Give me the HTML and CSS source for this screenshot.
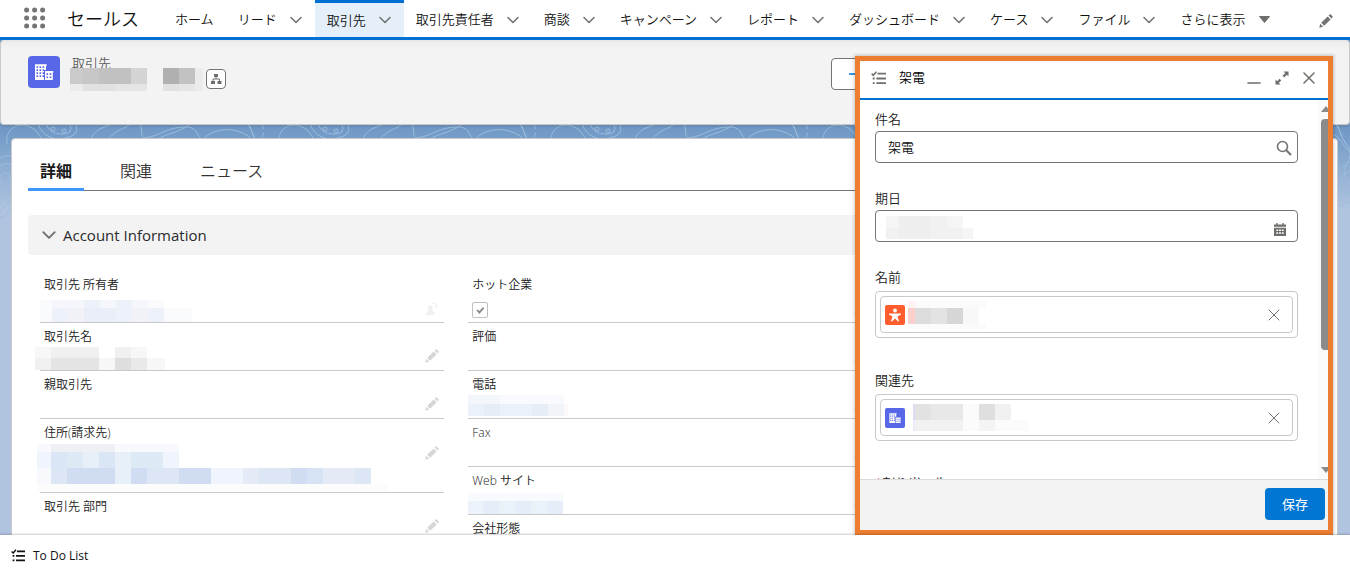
FILE: index.html
```html
<!DOCTYPE html>
<html lang="ja">
	<head>
		<title>取引先 | セールス</title>
		<meta charset="utf-8">
		<meta name="viewport" content="width=device-width, initial-scale=1.0">
		<link rel="stylesheet" href="styles.css">
	</head>
	<body>
		<!-- shared icons -->
		<svg width="0" height="0" class="defs" aria-hidden="true">
			<symbol id="chevron" viewBox="0 0 14 14"><path d="M2 4.500 L7 9.500 L12 4.500" fill="none" stroke="currentColor" stroke-width="1.6" stroke-linecap="round" stroke-linejoin="round"/></symbol>
			<symbol id="pencil" viewBox="0 0 14 14"><path d="M.3 13.7 L1.2 9.8 L4.2 12.8 Z M2.2 8.8 L8.6 2.4 L11.6 5.4 L5.2 11.8 Z M9.5 1.5 L10.6 .4 Q11.2 -.1 11.8 .5 L13.5 2.2 Q14 2.8 13.5 3.4 L12.5 4.5 Z" fill="currentColor"/></symbol>
			<symbol id="close" viewBox="0 0 12 12"><path d="M1 1 L11 11 M11 1 L1 11" fill="none" stroke="currentColor" stroke-width="1.5" stroke-linecap="round"/></symbol>
			<symbol id="close-thin" viewBox="0 0 12 12"><path d="M1 1 L11 11 M11 1 L1 11" fill="none" stroke="currentColor" stroke-linecap="round"/></symbol>
			<symbol id="tasks" viewBox="0 0 14 13"><path d="M.6 2.4 L2.2 4 L5 .7" fill="none" stroke="currentColor" stroke-width="1.4"/><path d="M6 1.5h8v1.8H6z M5 6h9v1.8H5z M5 10.4h9v1.8H5z M1.6 6h1.8v1.8H1.6z M1.6 10.4h1.8v1.8H1.6z" fill="currentColor"/></symbol>
			<symbol id="account" viewBox="0 0 32 32">
				<path fill="#fff" d="M7 8.300h11.700v1.700h-.7v4h-2v10H7z M17 15h8.300v1.500h-.5v7.500H17z"/>
				<path fill="#5867e8" d="M8.500 10.300h1.600v1.600H8.500z M11.500 10.300h1.600v1.600h-1.600z M14.500 10.300h1.600v1.600h-1.600z M8.500 13.300h1.600v1.600H8.500z M11.500 13.300h1.600v1.600h-1.600z M8.500 16.300h1.600v1.600H8.500z M11.500 16.300h1.600v1.600h-1.600z M8.500 19.300h1.600v1.600H8.500z M11.500 19.300h1.600v1.600h-1.600z M14.500 13.300h1.500v1.600h-1.500z M14.500 16.300h1.500v1.600h-1.500z M14.500 19.300h1.500v1.600h-1.500z M18.500 17.300h1.600v1.600h-1.600z M21.700 17.300h1.600v1.600h-1.600z M18.500 20.500h1.600v1.600h-1.600z M21.700 20.500h1.600v1.600h-1.600z"/>
			</symbol>
		</svg>

		<header class="nav">
			<button class="launcher" aria-label="アプリケーションランチャー">
				<svg width="23" height="23" viewBox="0 0 23 23" fill="#747474">
					<circle cx="2.600" cy="3" r="2.500"/><circle cx="10.600" cy="3" r="2.500"/><circle cx="18.600" cy="3" r="2.500"/>
					<circle cx="2.600" cy="11" r="2.500"/><circle cx="10.600" cy="11" r="2.500"/><circle cx="18.600" cy="11" r="2.500"/>
					<circle cx="2.600" cy="19" r="2.500"/><circle cx="10.600" cy="19" r="2.500"/><circle cx="18.600" cy="19" r="2.500"/>
				</svg>
			</button>
			<span class="app-name">セールス</span>
			<nav class="nav-items">
				<div class="nav-item"><a href="#home">ホーム</a></div>
				<div class="nav-item"><a href="#lead">リード</a><button aria-label="リードのリスト"><svg><use href="#chevron"/></svg></button></div>
				<div class="nav-item active"><a href="#account">取引先</a><button aria-label="取引先のリスト"><svg><use href="#chevron"/></svg></button></div>
				<div class="nav-item"><a href="#contact">取引先責任者</a><button aria-label="取引先責任者のリスト"><svg><use href="#chevron"/></svg></button></div>
				<div class="nav-item"><a href="#opportunity">商談</a><button aria-label="商談のリスト"><svg><use href="#chevron"/></svg></button></div>
				<div class="nav-item"><a href="#campaign">キャンペーン</a><button aria-label="キャンペーンのリスト"><svg><use href="#chevron"/></svg></button></div>
				<div class="nav-item"><a href="#report">レポート</a><button aria-label="レポートのリスト"><svg><use href="#chevron"/></svg></button></div>
				<div class="nav-item"><a href="#dashboard">ダッシュボード</a><button aria-label="ダッシュボードのリスト"><svg><use href="#chevron"/></svg></button></div>
				<div class="nav-item"><a href="#case">ケース</a><button aria-label="ケースのリスト"><svg><use href="#chevron"/></svg></button></div>
				<div class="nav-item"><a href="#file">ファイル</a><button aria-label="ファイルのリスト"><svg><use href="#chevron"/></svg></button></div>
				<div class="nav-item"><a href="#more">さらに表示</a><button aria-label="その他のタブ"><svg viewBox="0 0 14 14"><path d="M2.500 3.500h10l-5 6z" fill="#706e6b" stroke="#706e6b" stroke-linejoin="round"/></svg></button></div>
			</nav>
			<button class="nav-edit" aria-label="ナビゲーション項目を編集"><svg width="14" height="14"><use href="#pencil"/></svg></button>
		</header>

		<main class="stage">
			<svg class="topo" width="100%" height="180" aria-hidden="true">
				<defs>
					<pattern id="waves" width="272" height="180" patternUnits="userSpaceOnUse">
						<g fill="none" stroke="#9dbbdc" stroke-width="1">
							<path d="M7 104 C5 92 14 82 28 86 S40 106 56 112 S84 98 108 108"/>
							<path d="M38 84 C42 96 54 101 66 98 S78 90 75 82"/>
							<path d="M46 84 Q50 94 62 94 T70 84"/>
							<circle cx="53" cy="89" r="2"/><circle cx="64" cy="91" r="2"/>
							<path d="M90 102 C94 88 104 88 112 84 M140 84 C144 94 138 100 150 97 S166 88 184 87 S192 100 212 104"/>
							<path d="M104 104 C116 88 124 90 130 84 M156 104 C160 92 176 96 190 84"/>
							<path d="M200 104 C206 92 224 86 240 92 S252 104 262 112 M208 106 Q224 92 242 104"/>
							<path d="M248 84 L258 104 M262 84 Q266 94 260 100" stroke-dasharray="5 4"/>
							<circle cx="5" cy="138" r="5"/>
							<path d="M0 118 Q6 114 12 116 M0 126 Q8 121 14 126 M0 152 Q8 150 12 140 M-2 166 Q6 156 12 150 M-2 174 Q6 164 12 158 M0 178 Q8 176 12 166"/>
							<path d="M250 86 C256 108 264 106 262 116 S250 132 262 144 M254 128 Q262 120 274 118 M252 140 Q260 128 274 126 M252 148 Q262 138 274 140 M252 158 Q262 148 274 154 M252 166 Q262 158 274 166"/>
						</g>
					</pattern>
				</defs>
				<rect width="100%" height="180" fill="url(#waves)"/>
			</svg>

			<section class="record-header">
				<svg class="record-icon" width="32" height="32"><use href="#account"/></svg>
				<div class="record-title">
					<h1>取引先</h1>
					<div class="record-name">
						<svg class="mosaic" width="133" height="23">
							<path fill="#cbcbcb" d="M0 0h13v16H0z"/><path fill="#c7c7c7" d="M13 0h16v16H13z"/><path fill="#c1c1c1" d="M29 0h32v16H29z"/><path fill="#d4d4d4" d="M61 0h16v16H61z"/><path fill="#b0b0b0" d="M93 0h16v16H93z"/><path fill="#c2c2c2" d="M109 0h16v16h-16z"/><path fill="#ebebeb" d="M125 0h8v23h-8z M0 16h13v7H0z"/><path fill="#e1e1e1" d="M13 16h32v7H13z M93 16h16v7H93z"/><path fill="#e5e5e5" d="M45 16h32v7H45z M109 16h16v7h-16z"/>
						</svg>
						<button class="hierarchy" aria-label="取引先階層の表示">
							<svg width="12" height="12" viewBox="0 0 12 12"><path fill="#706e6b" d="M4 1h4v3H4z M1 8h4v3H1z M7.500 8h4v3h-4z"/><path d="M6 4v2 M3 8V6h6.500v2" fill="none" stroke="#706e6b"/></svg>
						</button>
					</div>
				</div>
				<button class="follow" aria-label="フォローする"><svg width="16" height="16" viewBox="0 0 16 16"><path d="M0 8h16M8 0v16" stroke="#3a96dd" stroke-width="2"/></svg></button>
			</section>

			<section class="card">
				<div class="tabs" role="tablist">
					<button class="tab selected" role="tab" aria-selected="true">詳細</button>
					<button class="tab" role="tab">関連</button>
					<button class="tab" role="tab">ニュース</button>
				</div>
				<button class="section-head"><svg width="16" height="16"><use href="#chevron"/></svg>Account Information</button>
				<div class="details">
					<div class="column">
						<div class="field tall">
							<span class="label">取引先 所有者</span>
							<div class="value">
								<svg class="mosaic" width="152" height="22">
									<path fill="#fafbfd" d="M0 0h12v22H0z M108 0h16v8h-16z M124 8h28v14h-28z"/><path fill="#f5f7fc" d="M12 0h32v8H12z M60 0h16v8H60z M92 0h16v8H92z"/><path fill="#edf1fa" d="M44 0h16v8H44z M76 0h16v8H76z M12 8h16v14H12z M76 8h16v14H76z M108 8h16v14h-16z"/><path fill="#f0f2f7" d="M28 8h16v14H28z M92 8h16v14H92z"/><path fill="#e9eef8" d="M44 8h32v14H44z"/>
								</svg>
								<button class="edit faint" aria-label="所有者を変更"><svg width="14" height="14" viewBox="0 0 14 14"><path fill="currentColor" d="M3 6a2.300 2.500 0 0 1 4.600 0q0 1.500-.8 2.700 2.800 1 2.800 4.300H1q0-3.300 2.800-4.300Q3 7.500 3 6z"/><path d="M7 1.500q4.500-1 4.500 4 M9.700 4.300 l1.800 1.800 1.800-1.800" fill="none" stroke="currentColor"/></svg></button>
							</div>
						</div>
						<div class="field">
							<span class="label">取引先名</span>
							<div class="value">
								<svg class="mosaic outdent" width="130" height="23">
									<path fill="#f7f7f7" d="M0 0h16v11H0z M96 0h16v11H96z M112 11h18v12h-18z M64 11h16v12H64z"/><path fill="#f0f0f0" d="M16 0h48v11H16z M80 0h16v11H80z M0 11h16v12H0z"/><path fill="#e4e4e4" d="M16 11h48v12H16z"/><path fill="#dedede" d="M80 11h16v12H80z"/><path fill="#e9e9e9" d="M96 11h16v12H96z"/>
								</svg>
								<button class="edit" aria-label="取引先名を編集"><svg width="14" height="14"><use href="#pencil"/></svg></button>
							</div>
						</div>
						<div class="field">
							<span class="label">親取引先</span>
							<div class="value"><button class="edit" aria-label="親取引先を編集"><svg width="14" height="14"><use href="#pencil"/></svg></button></div>
						</div>
						<div class="field address">
							<span class="label">住所(請求先)</span>
							<div class="value">
								<svg class="mosaic outdent" width="353" height="47">
									<path fill="#f8f9fd" d="M2 0h14v8H2z M80 0h64v8H80z M2 24h14v16H2z"/><path fill="#eef0f4" d="M16 0h64v8H16z"/>
									<path fill="#f0f5fd" d="M2 8h14v16H2z M128 8h16v16h-16z M176 24h32v16h-32z"/><path fill="#dae6f5" d="M16 8h16v16H16z M64 8h16v16H64z"/><path fill="#ddeaf6" d="M32 8h16v16H32z M96 8h32v16H96z"/><path fill="#e7eff9" d="M48 8h16v16H48z M80 8h16v32H80z"/>
									<path fill="#dce6f5" d="M16 24h16v16H16z M112 24h32v16h-32z M224 24h32v16h-32z M320 24h16v16h-16z"/><path fill="#cfdcf1" d="M32 24h48v16H32z M96 24h16v16H96z M144 24h32v16h-32z M256 24h16v16h-16z"/><path fill="#d6e3f4" d="M272 24h16v16h-16z"/><path fill="#e4ebf7" d="M208 24h16v16h-16z M288 24h32v16h-32z"/>
									<path fill="#fcfcfc" d="M2 40h351v7H2z"/>
								</svg>
								<button class="edit" aria-label="住所(請求先)を編集"><svg width="14" height="14"><use href="#pencil"/></svg></button>
							</div>
						</div>
						<div class="field">
							<span class="label">取引先 部門</span>
							<div class="value"><button class="edit" aria-label="取引先 部門を編集"><svg width="14" height="14"><use href="#pencil"/></svg></button></div>
						</div>
					</div>
					<div class="column">
						<div class="field tall">
							<label class="label" for="hot">ホット企業</label>
							<div class="value"><input type="checkbox" id="hot" checked disabled><button class="edit" aria-label="ホット企業を編集"><svg width="14" height="14"><use href="#pencil"/></svg></button></div>
						</div>
						<div class="field">
							<span class="label">評価</span>
							<div class="value"><button class="edit" aria-label="評価を編集"><svg width="14" height="14"><use href="#pencil"/></svg></button></div>
						</div>
						<div class="field">
							<span class="label">電話</span>
							<div class="value">
								<svg class="mosaic" width="100" height="23">
									<path fill="#f3f6fa" d="M0 0h32v9H0z"/><path fill="#f8fafe" d="M32 0h64v9H32z"/><path fill="#ebf1fa" d="M0 9h16v12H0z M32 9h32v12H32z"/><path fill="#e6edf7" d="M16 9h16v12H16z M64 9h16v12H64z"/><path fill="#f1f5fa" d="M80 9h16v12H80z"/><path fill="#fdf9fb" d="M96 9h4v12h-4z"/>
								</svg>
								<button class="edit" aria-label="電話を編集"><svg width="14" height="14"><use href="#pencil"/></svg></button>
							</div>
						</div>
						<div class="field">
							<span class="label">Fax</span>
							<div class="value"><button class="edit" aria-label="Faxを編集"><svg width="14" height="14"><use href="#pencil"/></svg></button></div>
						</div>
						<div class="field">
							<span class="label">Web サイト</span>
							<div class="value">
								<svg class="mosaic" width="95" height="21">
									<path fill="#f8fafe" d="M0 0h95v8H0z"/><path fill="#edf3fb" d="M0 8h15v13H0z"/><path fill="#e5edf8" d="M15 8h16v13H15z M79 8h16v13H79z M47 8h16v13H47z"/><path fill="#e9f1f9" d="M31 8h16v13H31z M63 8h16v13H63z"/>
								</svg>
								<button class="edit" aria-label="Web サイトを編集"><svg width="14" height="14"><use href="#pencil"/></svg></button>
							</div>
						</div>
						<div class="field">
							<span class="label">会社形態</span>
							<div class="value"></div>
						</div>
					</div>
				</div>
			</section>

			<!-- docked composer -->
			<section class="panel">
				<header class="panel-head">
					<svg width="15" height="14"><use href="#tasks"/></svg>
					<h2>架電</h2>
					<button aria-label="最小化"><svg width="14" height="14" viewBox="0 0 14 14"><path d="M1 12h12" stroke="currentColor" stroke-width="1.600" stroke-linecap="round"/></svg></button>
					<button aria-label="最大化"><svg width="14" height="14" viewBox="0 0 14 14"><path fill="currentColor" d="M8.500 .5h5v5l-1.700-1.700-2.600 2.600-1.600-1.600 2.600-2.600z M.5 8.500l1.700 1.700 2.400-2.400 1.600 1.600-2.400 2.400 1.700 1.700h-5z"/></svg></button>
					<button aria-label="閉じる"><svg width="12" height="12"><use href="#close"/></svg></button>
				</header>
				<div class="panel-body">
					<form class="task-form">
						<label for="subject">件名</label>
						<div class="text-box">
							<input type="text" id="subject" value="架電">
							<svg width="16" height="16" viewBox="0 0 16 16"><circle cx="6.500" cy="6.500" r="5" fill="none" stroke="#747474" stroke-width="1.600"/><path d="M10.300 10.300 L15 15" stroke="#747474" stroke-width="2"/></svg>
						</div>
						<label for="due">期日</label>
						<div class="text-box">
							<svg class="mosaic" width="87" height="23">
								<path fill="#f5f5f5" d="M0 0h13v12H0z M61 0h16v12H61z M77 12h10v11H77z"/><path fill="#f1f1f1" d="M0 12h13v11H0z M45 0h16v23H45z M61 12h16v11H61z"/><path fill="#eee" d="M13 0h32v23H13z"/>
							</svg>
							<input type="text" id="due">
							<svg class="calendar" width="12" height="13" viewBox="0 0 13 14"><path fill="#706e6b" d="M2.500 0h1.500v1.500h5V0h1.500v1.500H13V4H0V1.500h2.500z M0 5h13v9H0z"/><path fill="#fff" d="M2.500 7h2v1.500h-2z M5.500 7h2v1.500h-2z M8.500 7h2v1.500h-2z M2.500 10h2v1.500h-2z M5.500 10h2v1.500h-2z M8.500 10h2v1.500h-2z"/></svg>
						</div>
						<span class="form-label">名前</span>
						<div class="lookup">
							<div class="pill">
								<svg class="pill-icon contact" width="20" height="20" viewBox="0 0 20 20"><circle cx="10" cy="5.500" r="1.900" fill="#fff"/><path fill="#fff" d="M4 8.500h12v1l-3.500 2 1.500 4.700-1 .3-3-3-3 3-1-.3 1.500-4.700L4 9.500z"/></svg>
								<svg class="mosaic" width="78" height="28">
									<path fill="#fdf3f2" d="M0 0h7v7H0z"/><path fill="#fbfbfb" d="M7 0h71v7H7z M0 23h78v5H0z"/><path fill="#ffcfcb" d="M0 7h7v16H0z"/><path fill="#dcdcdc" d="M7 7h16v16H7z"/><path fill="#e3e3e3" d="M23 7h16v16H23z"/><path fill="#d6d6d6" d="M39 7h16v16H39z"/><path fill="#f8f8f8" d="M55 7h16v16H55z"/>
								</svg>
								<button type="button" aria-label="名前を削除"><svg width="12" height="12"><use href="#close-thin"/></svg></button>
							</div>
						</div>
						<span class="form-label related">関連先</span>
						<div class="lookup">
							<div class="pill">
								<svg class="pill-icon" width="20" height="20"><use href="#account"/></svg>
								<svg class="mosaic" width="121" height="27">
									<path fill="#dcdcf5" d="M5 0h2v16H5z"/><path fill="#e2e2e2" d="M7 0h16v16H7z"/><path fill="#e8e8e8" d="M23 0h32v16H23z"/><path fill="#dfdfdf" d="M71 0h16v16H71z"/><path fill="#f1f1f1" d="M87 0h16v16H87z M7 16h48v11H7z"/><path fill="#ecebfb" d="M5 16h2v11H5z"/><path fill="#f4f4f4" d="M71 16h16v11H71z"/><path fill="#fbfbfb" d="M55 0h16v27H55z M87 16h34v11H87z"/>
								</svg>
								<button type="button" aria-label="関連先を削除"><svg width="12" height="12"><use href="#close-thin"/></svg></button>
							</div>
						</div>
						<span class="form-label related"><abbr>*</abbr>割り当て先</span>
					</form>
					<div class="scrollbar" aria-hidden="true">
						<svg width="10" height="6"><path d="M5 0l5 6H0z" fill="#8b8b8b"/></svg>
						<div class="track"><div class="thumb"></div></div>
						<svg width="10" height="6"><path d="M0 0h10L5 6z" fill="#8b8b8b"/></svg>
					</div>
				</div>
				<footer class="panel-foot"><button class="save">保存</button></footer>
			</section>
		</main>

		<footer class="utility">
			<button><svg width="14" height="13"><use href="#tasks"/></svg>To Do List</button>
		</footer>
	</body>
</html>
```
FILE: styles.css
```css
* {
	box-sizing: border-box;
}
html, body {
	height: 100%;
}
body {
	display: flex;
	flex-direction: column;
	margin: 0;
	overflow: hidden;
	font-family: "Open Sans", "Noto Sans CJK JP", sans-serif;
	font-size: 13px;
	font-weight: 350;
	color: #111;
}
button {
	padding: 0;
	border: 0;
	background: none;
	font: inherit;
	color: inherit;
	cursor: pointer;
}
svg {
	display: block;
	flex: none;
}
h1, h2 {
	margin: 0;
	font-size: 13px;
	font-weight: inherit;
}
.defs {
	position: absolute;
}
.mosaic {
	shape-rendering: crispEdges;
}

/* global navigation */
.nav {
	display: flex;
	flex: none;
	align-items: center;
	height: 40px;
	padding: 0 17px 0 24px;
	border-bottom: 3px solid #0070d2;
	background: #fff;
	white-space: nowrap;
}
.app-name {
	margin: 0 24px 0 20px;
	font-size: 18px;
	line-height: 36px;
}
.nav-items {
	display: flex;
	align-self: stretch;
}
.nav-item {
	display: flex;
	align-items: center;
	gap: 12px;
	padding: 0 12px;
}
.nav-item a {
	color: inherit;
	text-decoration: none;
	line-height: 38px;
}
.nav-item button {
	padding-top: 3px;
	color: #747474;
}
.nav-item svg {
	width: 14px;
	height: 14px;
}
.nav-item.active {
	border-top: 3px solid #0070d2;
	background: #e4effa;
}
.nav-item.active a {
	line-height: 32px;
}
.nav-item.active button {
	padding-top: 0;
}
.nav-edit {
	margin: 4px 0 0 auto;
	color: #747474;
}

/* record page */
.stage {
	position: relative;
	flex: 1;
	min-height: 0;
	overflow: hidden;
	background: linear-gradient(#6d97c4 0, #7099c6 90px, #b0c4df 170px);
}
.topo {
	position: absolute;
	top: 0;
	left: 0;
}
.record-header {
	position: relative;
	display: flex;
	align-items: flex-start;
	height: 85px;
	padding: 15px 24px 0 27px;
	border: 1px solid #c9c9c9;
	border-top-color: #e5e5e5;
	border-radius: 4px;
	background: linear-gradient(#ebebeb, #f3f3f3 8px);
	box-shadow: 0 2px 2px rgba(0, 0, 0, 0.1);
}
.record-icon {
	border-radius: 4px;
	background: #5867e8;
}
.record-title {
	margin-left: 10px;
}
.record-title h1 {
	height: 12px;
	padding-left: 2px;
	line-height: 14px;
	color: #5c5c5c;
}
.record-name {
	position: relative;
	display: flex;
	gap: 3px;
}
.hierarchy {
	display: flex;
	align-items: center;
	justify-content: center;
	width: 20px;
	height: 20px;
	margin-top: 1px;
	border: 1px solid #747474;
	border-radius: 4px;
	background: #fff;
}
.follow {
	width: 120px;
	height: 32px;
	margin: 2px 374px 0 auto;
	padding-left: 17px;
	border: 1px solid #747474;
	border-radius: 4px;
	background: #fff;
}
.card {
	position: relative;
	min-height: 100%;
	margin: 13px 12px 0 11px;
	padding: 16px 24px 0 16px;
	border: 1px solid #c9c9c9;
	border-radius: 4px;
	background: #fff;
}
.tabs {
	display: flex;
	gap: 24px;
	box-shadow: inset 0 -1px #747474;
}
.tab {
	padding: 0 12px;
	border-bottom: 3px solid transparent;
	font-size: 16px;
	line-height: 33px;
	color: #333;
}
.tab.selected {
	border-color: #3c97fd;
	font-weight: 700;
	color: #181818;
}
.section-head {
	display: flex;
	align-items: center;
	gap: 6px;
	width: 100%;
	height: 40px;
	margin-top: 24px;
	padding-left: 13px;
	border-radius: 4px;
	background: #f3f3f3;
	font-size: 15px;
	font-weight: 400;
	color: #2b2b2b;
}
.section-head svg {
	color: #706e6b;
}
.details {
	display: grid;
	grid-template-columns: repeat(3, 1fr);
	gap: 24px;
	padding: 16px 12px 0;
}
.field {
	display: flex;
	flex-direction: column;
	height: 48px;
	padding-top: 5px;
	border-bottom: 1px solid #c9c9c9;
}
.field.tall {
	height: 52px;
}
.field.address {
	height: 74px;
}
.label {
	padding-left: 4px;
	font-size: 12px;
	line-height: 18px;
	color: #222;
}
.value {
	display: flex;
	flex: 1;
	align-items: flex-end;
}
.address .value {
	align-items: flex-start;
	padding-top: 2px;
}
.value .outdent {
	margin-left: -5px;
}
.edit {
	margin: 0 5px 7px auto;
	color: #d6d6d6;
}
.address .edit {
	margin-top: 2px;
}
.edit.faint {
	margin-bottom: 6px;
	color: #f0f0f0;
}
.value input {
	width: 16px;
	height: 16px;
	margin: 0 0 4px 4px;
	border: 1px solid #c0c0c0;
	border-radius: 2px;
	background: #fff;
	appearance: none;
}
.value input::before {
	display: block;
	width: 8px;
	height: 7px;
	margin: 4px 3px;
	background: #8c8c8c;
	clip-path: polygon(0 50%, 18% 35%, 38% 58%, 82% 0, 100% 18%, 38% 100%);
	content: "";
}

/* docked task panel */
.panel {
	position: absolute;
	top: 16px;
	right: 17px;
	bottom: 0;
	display: flex;
	flex-direction: column;
	width: 478px;
	border: 5px solid #ed7d31;
	background: #fff;
	box-shadow: 0 0 3px 1px rgba(0, 0, 0, 0.2);
}
.panel-head {
	display: flex;
	flex: none;
	align-items: center;
	gap: 14px;
	height: 39px;
	padding: 0 13px 4px 11px;
	border-bottom: 2px solid #0070d2;
	color: #706e6b;
}
.panel-head h2 {
	margin-left: -1px;
	margin-right: auto;
	line-height: 16px;
	padding-bottom: 2px;
	color: #000;
}
.panel-body {
	display: flex;
	flex: 1;
	justify-content: space-between;
	min-height: 0;
	overflow: hidden;
}
.task-form {
	flex: 1;
	padding: 9px 20px 0 15px;
}
.task-form label, .form-label {
	display: block;
	padding-bottom: 2px;
	line-height: 20px;
	color: #222;
}
.form-label {
	padding-bottom: 4px;
}
.text-box {
	display: flex;
	align-items: center;
	height: 32px;
	margin-bottom: 25px;
	padding: 2px 5px 0 10px;
	border: 1px solid #747474;
	border-radius: 4px;
}
.text-box input {
	flex: 1;
	min-width: 0;
	padding: 0 2px 4px;
	border: 0;
	outline: 0;
	background: none;
	font: inherit;
	color: #111;
}
.calendar {
	margin: 4px 6px 0 0;
}
.lookup {
	height: 47px;
	padding: 4px;
	border: 1px solid #c9c9c9;
	border-radius: 4px;
}
.pill {
	display: flex;
	align-items: center;
	height: 37px;
	padding: 0 12px 0 4px;
	border: 1px solid #c9c9c9;
	border-radius: 4px;
}
.pill-icon {
	margin-right: 3px;
	border-radius: 2px;
	background: #5867e8;
}
.pill-icon.contact {
	background: #ff5d2d;
}
.pill button {
	margin-left: auto;
	color: #747474;
}
.related {
	margin-top: 32px;
}
.related abbr {
	color: #ea001e;
}
.scrollbar {
	display: flex;
	flex-direction: column;
	width: 10px;
	padding: 6px 0 6px 3px;
	overflow: hidden;
	background: #fafafa;
}
.track {
	flex: 1;
	margin: 7px 0 9px;
}
.thumb {
	width: 10px;
	height: 68%;
	border-radius: 4px;
	background: #8b8b8b;
}
.panel-foot {
	display: flex;
	flex: none;
	justify-content: flex-end;
	padding: 8px 3px 10px;
	border-top: 1px solid #dddbda;
	background: #f3f3f3;
}
.save {
	height: 32px;
	padding: 0 17px 2px;
	border-radius: 4px;
	background: #0176d3;
	font-weight: 400;
	color: #fff;
}

/* utility bar */
.utility {
	position: relative;
	display: flex;
	flex: none;
	height: 39px;
	padding: 2px 11px 0;
	background: #fff;
	box-shadow: 0 -1px 2px rgba(0, 0, 0, 0.2);
}
.utility button {
	display: flex;
	align-items: center;
	gap: 8px;
	font-size: 12px;
	font-weight: 400;
}
```
